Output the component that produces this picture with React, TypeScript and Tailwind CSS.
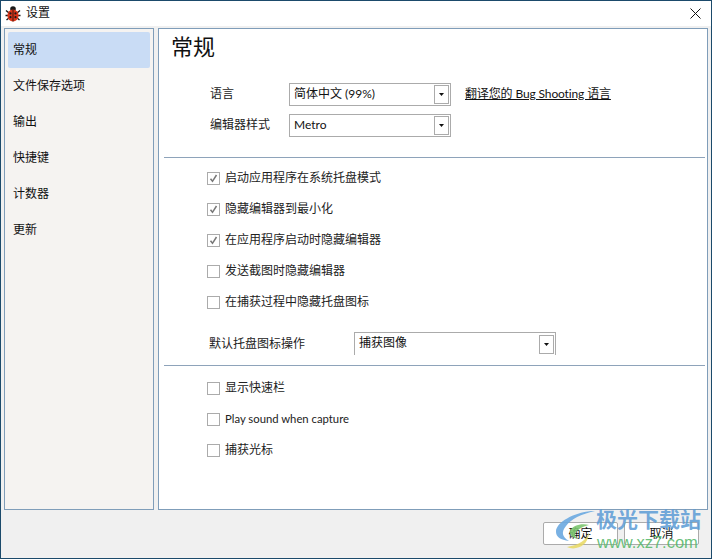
const FONT = "font-['Lato','Noto_Sans_CJK_SC',sans-serif]";

const NAV_ITEMS = ["常规", "文件保存选项", "输出", "快捷键", "计数器", "更新"];

function BugIcon() {
  return (
    <svg width="16" height="16" viewBox="0 0 16 16" className="shrink-0">
      <g stroke="#1a1a1a" strokeWidth="1.4" fill="none">
        <path d="M1 4.5l3 2.5M15 4.5l-3 2.5M0.5 9.5h3M15.5 9.5h-3M1.5 14l3-2.5M14.5 14l-3-2.5" />
      </g>
      <circle cx="8" cy="3" r="2.8" fill="#1a1a1a" />
      <ellipse cx="8" cy="9.4" rx="5.6" ry="6" fill="#dc3418" />
      <path d="M8 3.5v12" stroke="#3a1a10" strokeWidth="1" />
      <circle cx="5.5" cy="7.4" r="1.1" fill="#1a1a1a" />
      <circle cx="10.5" cy="7.4" r="1.1" fill="#1a1a1a" />
      <circle cx="5.5" cy="11.2" r="1.1" fill="#1a1a1a" />
      <circle cx="10.5" cy="11.2" r="1.1" fill="#1a1a1a" />
    </svg>
  );
}

function Select({ value, width, open }: { value: string; width: string; open?: boolean }) {
  return (
    <div
      className={`${width} h-[23px] flex items-center justify-between bg-white border border-[#ababab] pl-[4px] pr-[1px] ${open ? "border-b-0" : ""}`}
    >
      <span className="text-[12px] leading-none text-[#111] -translate-y-[1px]">{value}</span>
      <span className="w-[15px] h-[19px] border border-[#ababab] flex items-center justify-center">
        <svg width="5" height="3" viewBox="0 0 5 3">
          <path d="M0 0h5L2.5 3z" fill="#111" />
        </svg>
      </span>
    </div>
  );
}

function Check({ label, checked, small }: { label: string; checked?: boolean; small?: boolean }) {
  return (
    <div className="h-[31px] flex items-center pl-[43px]">
      <span className="w-[13px] h-[13px] border border-[#ababab] bg-white flex items-center justify-center shrink-0">
        {checked && (
          <svg width="11" height="11" viewBox="0 0 11 11">
            <path d="M2.5 5.7l2 2.6L8.5 2" fill="none" stroke="#777" strokeWidth="1.5" />
          </svg>
        )}
      </span>
      <span className={`ml-[5px] ${small ? "text-[11.3px]" : "text-[12px]"} leading-none text-[#222] -translate-y-[1px]`}>{label}</span>
    </div>
  );
}

function Watermark() {
  return (
    <div className="absolute left-[550px] top-[505px] w-[162px] h-[54px] pointer-events-none">
      <svg width="60" height="42" viewBox="0 0 60 42" className="absolute left-[2px] top-[4px]">
        <path d="M38 1C20 3 4 12 3 21c-.5 6 5 9 13 10C9 27 8 22 13 16 18 9 28 4 42 1z" fill="#6aa8e0" opacity="0.9" />
        <path d="M36 15c-8-2-17 1-19 6-1 4 3 7 8 8-3-2-4-5-1-8 3-3 7-5 12-6z" fill="#7cc56f" opacity="0.9" />
        <path d="M36 22c-2 8-10 13-22 15 2 1 6 2 9 1 8-1 13-8 13-16z" fill="#e8d860" opacity="0.85" />
      </svg>
      <div className="absolute left-[45px] top-[-1px] text-[21px] leading-[26px] font-bold text-[#5b9bd5]/85 whitespace-nowrap font-['Noto_Sans_CJK_SC',sans-serif]">
        极光下载站
      </div>
      <div className="absolute left-[46px] top-[26px] text-[16.5px] leading-[20px] font-['Liberation_Sans',sans-serif] text-[#57b96a]/90 whitespace-nowrap">
        www.xz7.com
      </div>
    </div>
  );
}

export default function App() {
  return (
    <div className={`${FONT} relative w-[712px] h-[559px] overflow-hidden bg-[#f0f0f0] border border-[#1b4a6b] flex flex-col`}>
      <div className="h-[25px] bg-white flex items-center pl-[4px] shrink-0">
        <BugIcon />
        <span className="ml-[5px] text-[12px] leading-none text-[#111] -translate-y-[1px]">设置</span>
        <svg width="11" height="11" viewBox="0 0 11 11" className="ml-auto mr-[10px]">
          <path d="M.5.5l10 10M10.5.5l-10 10" stroke="#111" strokeWidth="1" />
        </svg>
      </div>

      <div className="flex gap-[4px] px-[3px] pt-[2px] h-[484px] shrink-0">
        <div className="w-[150px] border border-[#7f9db9] bg-[#f5f3f1] p-[3px]">
          {NAV_ITEMS.map((item, i) => (
            <div
              key={item}
              className={`h-[36px] flex items-center pl-[5px] pb-[1px] text-[12px] text-[#111] rounded-[2px] ${i === 0 ? "bg-[#c9dcf5]" : ""}`}
            >
              {item}
            </div>
          ))}
        </div>

        <div className="w-[550px] border border-[#7f9db9] bg-white pl-[5px] pr-[2px]">
          <h1 className="pl-[7px] h-[39px] pt-[3px] text-[22px] leading-[30px] text-[#111]">常规</h1>

          <div className="mt-[15px] pl-[46px] flex items-center h-[23px]">
            <span className="w-[79px] text-[12px] text-[#222] -translate-y-[1px]">语言</span>
            <Select value="简体中文 (99%)" width="w-[162px]" />
            <span className="ml-[14px] text-[12px] leading-[14px] tracking-[-0.13px] text-[#111] underline underline-offset-1 -translate-y-[1px]">翻译您的 Bug Shooting 语言</span>
          </div>
          <div className="mt-[8px] pl-[46px] flex items-center h-[23px]">
            <span className="w-[79px] text-[12px] text-[#222] -translate-y-[1px]">编辑器样式</span>
            <Select value="Metro" width="w-[162px]" />
          </div>

          <div className="mt-[20px] h-[1px] bg-[#8ea3ba]" />

          <div className="mt-[5px]">
            <Check label="启动应用程序在系统托盘模式" checked />
            <Check label="隐藏编辑器到最小化" checked />
            <Check label="在应用程序启动时隐藏编辑器" checked />
            <Check label="发送截图时隐藏编辑器" />
            <Check label="在捕获过程中隐藏托盘图标" />
          </div>

          <div className="mt-[14px] pl-[45px] flex items-center h-[23px]">
            <span className="w-[145px] text-[12px] text-[#222]">默认托盘图标操作</span>
            <Select value="捕获图像" width="w-[202px]" open />
          </div>

          <div className="mt-[10px] h-[1px] bg-[#8ea3ba]" />

          <div className="mt-[7px]">
            <Check label="显示快速栏" />
            <Check label="Play sound when capture" small />
            <Check label="捕获光标" />
          </div>
        </div>
      </div>

      <div className="flex justify-end gap-[6px] pr-[12px] pt-[12px]">
        <button className="w-[75px] h-[23px] bg-white border border-[#ababab] rounded-[2px] text-[12px] text-[#111]">确定</button>
        <button className="w-[75px] h-[23px] bg-white border border-[#ababab] rounded-[2px] text-[12px] text-[#111]">取消</button>
      </div>

      <Watermark />
    </div>
  );
}
